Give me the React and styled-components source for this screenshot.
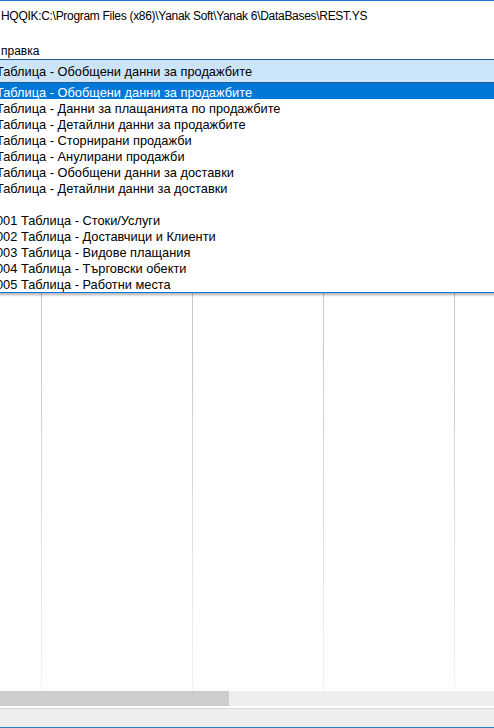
import React from "react";
import styled, { createGlobalStyle } from "styled-components";

const Global = createGlobalStyle`
  html, body { margin: 0; padding: 0; background: #ffffff; overflow: hidden; }
  #root { width: 494px; height: 728px; }
`;

const Window = styled.div`
  width: 494px;
  height: 728px;
  display: flex;
  flex-direction: column;
  border-top: 1px solid #1c7ed6;
  box-sizing: border-box;
  font-family: "Liberation Sans", Arial, sans-serif;
  color: #000;
  overflow: hidden;
  position: relative;
`;

const TitleRow = styled.div`
  height: 29px;
  display: flex;
  align-items: center;
  padding: 0 0 0 1px;
  font-size: 12px;
  letter-spacing: -0.3px;
  white-space: nowrap;
`;

const MenuBar = styled.div`
  height: 29px;
  display: flex;
  align-items: flex-end;
  padding: 0 0 1px 1px;
  box-sizing: border-box;
  font-size: 12px;
`;

const Combo = styled.div`
  height: 23px;
  box-sizing: border-box;
  border-top: 1px solid #245d92;
  background: #cce4f7;
  display: flex;
  align-items: center;
  padding-top: 1px;
  margin-left: -4px;
  font-size: 12.8px;
  white-space: nowrap;
`;

const GridArea = styled.div`
  position: relative;
  flex: 1;
  display: flex;
`;

const Column = styled.div`
  width: ${(p) => p.$w}px;
  flex: none;
  border-right: 1px solid;
  border-image: linear-gradient(#bdbdbd, #c8c8c8 40%, #f3f3f3) 1;
`;

const LastColumn = styled.div`
  flex: 1;
`;

const Dropdown = styled.div`
  position: absolute;
  top: 0;
  left: -4px;
  right: -10px;
  background: #ffffff;
  border-top: 1px solid #245d92;
  border-bottom: 1px solid #0078d7;
  padding-bottom: 1px;
  box-shadow: 0 2px 2px rgba(0, 0, 0, 0.22), 0 3px 3px rgba(0, 0, 0, 0.08);
  font-size: 12.8px;
`;

const Item = styled.div`
  height: 16px;
  box-sizing: border-box;
  padding-top: 1.5px;
  line-height: 15px;
  white-space: nowrap;
  background: ${(p) => (p.$selected ? "#0078d7" : "transparent")};
  color: ${(p) => (p.$selected ? "#ffffff" : "#000000")};
`;

const HScroll = styled.div`
  height: 15px;
  background: #eeeeee;
  display: flex;
`;

const Thumb = styled.div`
  width: 229px;
  background: #cdcdcd;
`;

const Gap = styled.div`
  height: 2px;
  background: #ffffff;
  border-bottom: 1px solid #d6d6d6;
`;

const StatusBar = styled.div`
  height: 19px;
  box-sizing: border-box;
  background: #eeeeee;
  border-bottom: 1px solid #2a7bc4;
`;

const items = [
  "Таблица - Обобщени данни за продажбите",
  "Таблица - Данни за плащанията по продажбите",
  "Таблица - Детайлни данни за продажбите",
  "Таблица - Сторнирани продажби",
  "Таблица - Анулирани продажби",
  "Таблица - Обобщени данни за доставки",
  "Таблица - Детайлни данни за доставки",
  "",
  "001 Таблица - Стоки/Услуги",
  "002 Таблица - Доставчици и Клиенти",
  "003 Таблица - Видове плащания",
  "004 Таблица - Търговски обекти",
  "005 Таблица - Работни места",
];

export default function App() {
  return (
    <>
      <Global />
      <Window>
        <TitleRow>HQQIK:C:\Program Files (x86)\Yanak Soft\Yanak 6\DataBases\REST.YS</TitleRow>
        <MenuBar>правка</MenuBar>
        <Combo>Таблица - Обобщени данни за продажбите</Combo>
        <GridArea>
          <Column $w={41} />
          <Column $w={150} />
          <Column $w={130} />
          <Column $w={130} />
          <LastColumn />
          <Dropdown>
            {items.map((t, i) => (
              <Item key={i} $selected={i === 0}>
                {t || "\u00a0"}
              </Item>
            ))}
          </Dropdown>
        </GridArea>
        <HScroll>
          <Thumb />
        </HScroll>
        <Gap />
        <StatusBar />
      </Window>
    </>
  );
}
